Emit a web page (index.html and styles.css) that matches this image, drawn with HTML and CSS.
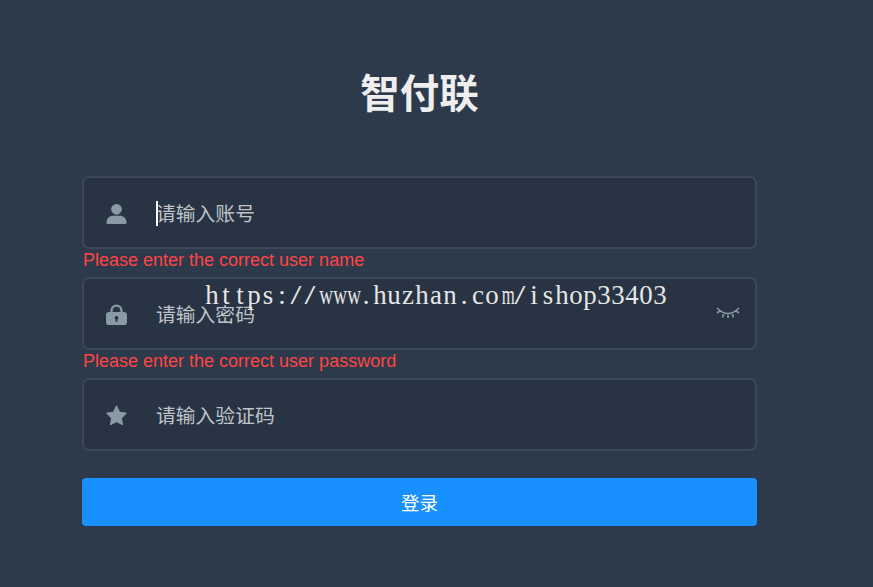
FILE: index.html

```html
<!DOCTYPE html>
<html lang="en">
<head>
  <meta charset="UTF-8" />
  <meta name="viewport" content="width=device-width, initial-scale=1.0"/>
  <title>智付联</title>
  <link rel="stylesheet" href="styles.css">
</head>
<body>
  <div class="login-page">
    <form class="login-form">
      <h1 class="title">智付联</h1>

      <div class="field">
        <svg class="icon" viewBox="0 0 22 22"><circle cx="11" cy="6.6" r="5.6"/><path d="M0.5 21c0-5 3.5-7.6 7-7.6h7c3.500 0 7 2.600 7 7.600 0 .5-.4 1-1 1h-19c-.6 0-1-.5-1-1z"/></svg>
        <div class="input-wrap">
          <span class="caret"></span>
          <input type="text" placeholder="请输入账号" />
        </div>
      </div>
      <div class="error">Please enter the correct user name</div>

      <div class="field">
        <svg class="icon" viewBox="0 0 22 22"><path fill-rule="evenodd" d="M4.500 8.500V7a6.500 6.500 0 0 1 13 0v1.500H19c1.700 0 3 1 3 3V19c0 2-1.300 3-3 3H3c-1.700 0-3-1-3-3v-7.500c0-2 1.300-3 3-3zM7 8.500h8V7a4 4 0 0 0-8 0zM11 12.500a2 2 0 0 0-1 3.700V18.500h2v-2.300a2 2 0 0 0-1-3.700z"/></svg>
        <div class="input-wrap">
          <input type="text" placeholder="请输入密码" />
        </div>
        <svg class="eye" viewBox="0 0 24 13"><path d="M1 2Q12 13 23 2M1 7L4.500 4.500M23 7L19.500 4.500M6.500 11.500L7.500 8M17.500 11.500L16.500 8M12 12V8.500"/></svg>
      </div>
      <div class="error">Please enter the correct user password</div>

      <div class="field">
        <svg class="icon star" viewBox="0 0 22 22"><path d="M11 1.400l3 6.300 6.800 1-4.900 4.800 1.200 6.800L11 17.100l-6.100 3.200 1.200-6.800-4.900-4.800 6.800-1z"/></svg>
        <div class="input-wrap">
          <input type="text" placeholder="请输入验证码" />
        </div>
      </div>

      <button type="button" class="login-btn">登录</button>
    </form>
    <div class="watermark"><span>h</span><span>t</span><span>t</span><span>p</span><span>s</span><span>:</span><span class="slash">/</span><span class="slash">/</span><span class="wide">w</span><span class="wide">w</span><span class="wide">w</span><span>.</span><span>h</span><span>u</span><span>z</span><span>h</span><span>a</span><span>n</span><span>.</span><span>c</span><span>o</span><span class="wide em">m</span><span class="slash">/</span><span>i</span><span>s</span><span>h</span><span>o</span><span>p</span><span>3</span><span>3</span><span>4</span><span>0</span><span>3</span></div>
  </div>
</body>
</html>
```

FILE: styles.css

```css
html, body {
  margin: 0;
  padding: 0;
  height: 100%;
  overflow: hidden;
}
body {
  background-color: #2d3a4b;
  font-family: "Liberation Sans", "Noto Sans CJK SC", sans-serif;
}
.login-page {
  position: relative;
  height: 100%;
}
.login-form {
  width: 675px;
  margin-left: 82px;
  padding-top: 68px;
}
.title {
  margin: 0 0 57px;
  height: 51px;
  line-height: 52px;
  font-size: 39.500px;
  font-weight: 700;
  text-align: center;
  color: #eeeeee;
}
.field {
  display: flex;
  align-items: center;
  box-sizing: border-box;
  height: 73px;
  border: 2.5px solid #3a4858;
  border-radius: 7px;
  background-color: #283443;
}
.icon {
  width: 21px;
  height: 21px;
  margin: 2px 0 0 21.500px;
  flex: none;
  fill: #889aa4;
}
.star {
  stroke: #889aa4;
  stroke-width: 1.500;
  stroke-linejoin: round;
}
.input-wrap {
  position: relative;
  flex: 1;
  margin-left: 29.500px;
}
.input-wrap input {
  display: block;
  box-sizing: border-box;
  width: 100%;
  padding: 4px 0 0;
  height: 40px;
  border: 0;
  outline: 0;
  background: transparent;
  color: #ffffff;
  font-family: "Liberation Sans", "Noto Sans CJK SC", sans-serif;
  font-size: 19.800px;
}
.input-wrap input::placeholder {
  color: #bfc3c9;
  opacity: 1;
}
.caret {
  position: absolute;
  left: 0;
  top: 8px;
  width: 2px;
  height: 25px;
  background-color: #ffffff;
}
.eye {
  width: 24px;
  height: 13px;
  margin: 0 15px 3px 0;
  flex: none;
  fill: none;
  stroke: #889aa4;
  stroke-width: 1.600;
}
.error {
  box-sizing: border-box;
  height: 28px;
  line-height: 20px;
  padding-top: 1px;
  padding-left: 1px;
  font-size: 18px;
  color: #ff4444;
}
.login-btn {
  display: block;
  width: 100%;
  height: 48px;
  margin-top: 27px;
  border: 0;
  border-radius: 4px;
  background-color: #1890ff;
  color: #ffffff;
  font-family: "Liberation Sans", "Noto Sans CJK SC", sans-serif;
  font-size: 18.500px;
}
/* sits over the password row */
.watermark {
  position: absolute;
  left: 205px;
  top: 279px;
  display: flex;
  font-family: "Liberation Serif", serif;
  font-size: 28px;
  line-height: 32px;
  color: #e6e6e6;
  white-space: nowrap;
}
.watermark span {
  display: block;
  width: 14px;
  text-align: center;
  transform: scaleX(.96);
}
.watermark .wide {
  transform: scaleX(.68);
}
.watermark .em {
  transform: scaleX(.6);
}
.watermark .slash {
  transform: scaleX(1.4);
}
```
